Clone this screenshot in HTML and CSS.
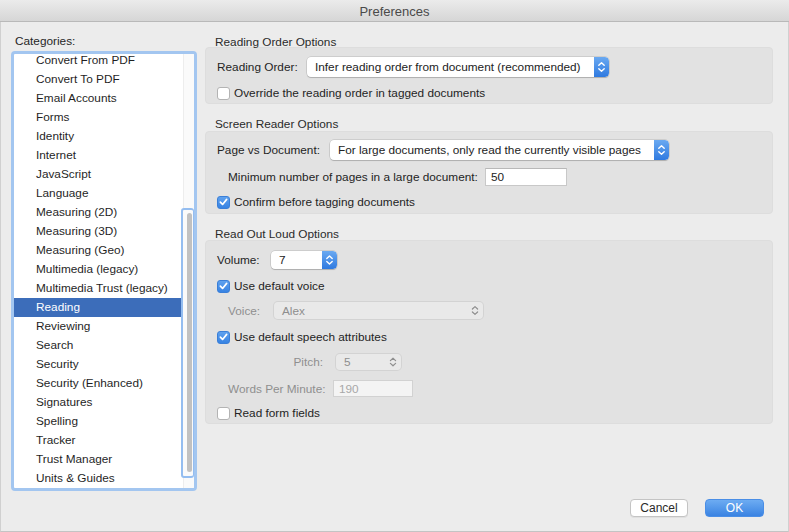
FILE: index.html
```html
<!DOCTYPE html>
<html>
<head>
<meta charset="utf-8">
<title>Preferences</title>
<link rel="stylesheet" href="styles.css">
</head>
<body>
<div class="window">
  <div class="titlebar">Preferences</div>
  <div class="content">
    <div class="left">
      <div class="cat-label">Categories:</div>
      <div class="listbox">
        <ul class="list">
          <li>Convert From PDF</li>
          <li>Convert To PDF</li>
          <li>Email Accounts</li>
          <li>Forms</li>
          <li>Identity</li>
          <li>Internet</li>
          <li>JavaScript</li>
          <li>Language</li>
          <li>Measuring (2D)</li>
          <li>Measuring (3D)</li>
          <li>Measuring (Geo)</li>
          <li>Multimedia (legacy)</li>
          <li>Multimedia Trust (legacy)</li>
          <li class="sel">Reading</li>
          <li>Reviewing</li>
          <li>Search</li>
          <li>Security</li>
          <li>Security (Enhanced)</li>
          <li>Signatures</li>
          <li>Spelling</li>
          <li>Tracker</li>
          <li>Trust Manager</li>
          <li>Units &amp; Guides</li>
        </ul>
        <div class="scrolltrack">
          <div class="scrollring"><div class="thumb"></div></div>
        </div>
      </div>
    </div>
    <div class="right">
      <div class="gtitle t1">Reading Order Options</div>
      <div class="group g1">
        <div class="row r-ro">
          <span class="lbl w-ro">Reading Order:</span>
          <div class="select sel-ro">
            <span class="seltext">Infer reading order from document (recommended)</span>
            <span class="stepper"><svg width="15" height="20" viewBox="0 0 15 20"><path d="M4.8 8.3 L7.5 5.8 L10.2 8.3 M4.8 11.7 L7.5 14.2 L10.2 11.7" fill="none" stroke="#fff" stroke-width="1.4" stroke-linecap="round" stroke-linejoin="round"/></svg></span>
          </div>
        </div>
        <div class="row chkrow c-ovr">
          <span class="chk"></span>
          <span class="lbl">Override the reading order in tagged documents</span>
        </div>
      </div>

      <div class="gtitle t2">Screen Reader Options</div>
      <div class="group g2">
        <div class="row r-pd">
          <span class="lbl w-pd">Page vs Document:</span>
          <div class="select sel-pd">
            <span class="seltext">For large documents, only read the currently visible pages</span>
            <span class="stepper"><svg width="15" height="20" viewBox="0 0 15 20"><path d="M4.8 8.3 L7.5 5.8 L10.2 8.3 M4.8 11.7 L7.5 14.2 L10.2 11.7" fill="none" stroke="#fff" stroke-width="1.4" stroke-linecap="round" stroke-linejoin="round"/></svg></span>
          </div>
        </div>
        <div class="row r-min">
          <span class="lbl w-min">Minimum number of pages in a large document:</span>
          <div class="input in-min">50</div>
        </div>
        <div class="row chkrow c-conf">
          <span class="chk on"><svg width="14" height="14" viewBox="0 0 14 14"><path d="M3.6 7.2 L6 9.6 L10.4 4.2" fill="none" stroke="#fff" stroke-width="1.8" stroke-linecap="round" stroke-linejoin="round"/></svg></span>
          <span class="lbl">Confirm before tagging documents</span>
        </div>
      </div>

      <div class="gtitle t3">Read Out Loud Options</div>
      <div class="group g3">
        <div class="row r-vol">
          <span class="lbl w-vol">Volume:</span>
          <div class="select sel-vol">
            <span class="seltext">7</span>
            <span class="stepper"><svg width="15" height="18" viewBox="0 0 15 18"><path d="M4.8 7.4 L7.5 4.9 L10.2 7.4 M4.8 10.6 L7.5 13.1 L10.2 10.6" fill="none" stroke="#fff" stroke-width="1.4" stroke-linecap="round" stroke-linejoin="round"/></svg></span>
          </div>
        </div>
        <div class="row chkrow c-voice">
          <span class="chk on"><svg width="14" height="14" viewBox="0 0 14 14"><path d="M3.6 7.2 L6 9.6 L10.4 4.2" fill="none" stroke="#fff" stroke-width="1.8" stroke-linecap="round" stroke-linejoin="round"/></svg></span>
          <span class="lbl">Use default voice</span>
        </div>
        <div class="row r-voice">
          <span class="lbl dis w-voice">Voice:</span>
          <div class="select dsel sel-voice">
            <span class="seltext">Alex</span>
            <span class="dstep"><svg width="12" height="17" viewBox="0 0 12 17"><path d="M3.4 7 L6 4.6 L8.6 7 M3.4 10 L6 12.4 L8.6 10" fill="none" stroke="#8e8e8e" stroke-width="1.2" stroke-linecap="round" stroke-linejoin="round"/></svg></span>
          </div>
        </div>
        <div class="row chkrow c-speech">
          <span class="chk on"><svg width="14" height="14" viewBox="0 0 14 14"><path d="M3.6 7.2 L6 9.6 L10.4 4.2" fill="none" stroke="#fff" stroke-width="1.8" stroke-linecap="round" stroke-linejoin="round"/></svg></span>
          <span class="lbl">Use default speech attributes</span>
        </div>
        <div class="row r-pitch">
          <span class="lbl dis w-pitch">Pitch:</span>
          <div class="select dsel sel-pitch">
            <span class="seltext">5</span>
            <span class="dstep"><svg width="12" height="16" viewBox="0 0 12 16"><path d="M3.4 6.6 L6 4.2 L8.6 6.6 M3.4 9.4 L6 11.8 L8.6 9.4" fill="none" stroke="#8e8e8e" stroke-width="1.2" stroke-linecap="round" stroke-linejoin="round"/></svg></span>
          </div>
        </div>
        <div class="row r-wpm">
          <span class="lbl dis w-wpm">Words Per Minute:</span>
          <div class="input din in-wpm">190</div>
        </div>
        <div class="row chkrow c-form">
          <span class="chk"></span>
          <span class="lbl">Read form fields</span>
        </div>
      </div>
    </div>
  </div>
  <div class="footer">
    <button class="btn cancel">Cancel</button>
    <button class="btn ok">OK</button>
  </div>
</div>
</body>
</html>
```

FILE: styles.css
```css
* { box-sizing: border-box; }
html, body { margin: 0; padding: 0; }
body {
  background: #ececec;
  font-family: "Liberation Sans", Arial, sans-serif;
  font-size: 11.8px;
  color: #262626;
  width: 789px;
  height: 532px;
  overflow: hidden;
}
.window {
  width: 789px;
  height: 532px;
  display: flex;
  flex-direction: column;
  border-left: 1px solid #d0d0d0;
  border-right: 1px solid #d0d0d0;
  border-bottom: 1px solid #c4c4c4;
}
.titlebar {
  height: 22px;
  flex: none;
  background: linear-gradient(#ebebeb, #d6d6d6);
  border-bottom: 1px solid #b9b9b9;
  text-align: center;
  font-size: 13px;
  line-height: 23px;
  color: #4a4a4a;
  margin: 0 -1px;
}
.content {
  display: flex;
  padding: 11px 0 0 10px;
  height: 470px;
  flex: none;
}
.left { width: 186px; flex: none; }
.cat-label { height: 18px; line-height: 16px; padding-left: 4px; }
.listbox {
  height: 440px;
  border: 3px solid #a3c6f0;
  border-radius: 4px;
  background: #fff;
  display: flex;
  overflow: hidden;
}
.list {
  list-style: none;
  margin: -3px 0 0 0;
  padding: 0;
  flex: 1;
}
.list li {
  height: 19px;
  line-height: 19px;
  padding-left: 22px;
  white-space: nowrap;
  color: #1f1f1f;
}
.list li.sel { background: #3c6dba; color: #fff; }
.scrolltrack {
  width: 11px;
  flex: none;
  border-left: 1px solid #ededed;
  padding-top: 154px;
  background: #fafafa;
}
.scrollring {
  height: 270px;
  border: 2px solid #94bdf0;
  border-right-width: 1px;
  border-radius: 3px;
  margin-left: -3px;
  padding: 3px 1px 4px 4px;
  display: flex;
  background: #fafafa;
}
.thumb {
  width: 6px;
  height: 100%;
  background: #c1c1c1;
  border-radius: 3px;
}
.right { width: 568px; margin-left: 8px; flex: none; }
.gtitle { height: 14px; padding-left: 10px; color: #2a2a2a; }
.t1 { line-height: 18px; }
.t2 { margin-top: 13px; line-height: 15px; }
.t3 { margin-top: 12px; line-height: 16px; }
.group {
  background: #e2e2e2;
  border: 1px solid #dddddd;
  border-radius: 4px;
  padding-left: 11px;
}
.g1 { height: 57px; padding-top: 9px; }
.g2 { height: 83px; padding-top: 8px; }
.g3 { height: 184px; padding-top: 9px; }
.row { display: flex; align-items: center; white-space: nowrap; }
.lbl { color: #242424; }
.lbl.dis { color: #8f8f8f; }
.w-ro { width: 90px; }
.w-pd { width: 113px; }
.w-min { width: 268px; padding-left: 11px; }
.w-vol { width: 54px; }
.w-voice { width: 57px; padding-left: 11px; }
.w-pitch { width: 119px; text-align: right; padding-right: 13px; }
.w-wpm { width: 116px; padding-left: 11px; }
.select {
  height: 20px;
  background: #fff;
  border-radius: 4px;
  box-shadow: 0 0 0 0.5px rgba(0,0,0,0.18), 0 1px 1px rgba(0,0,0,0.15);
  display: flex;
  align-items: center;
  justify-content: space-between;
  padding-left: 8px;
  overflow: hidden;
}
.seltext { color: #222; }
.stepper {
  width: 15px;
  height: 100%;
  background: linear-gradient(#6aa9f1, #2f7ae0);
  border-radius: 0 4px 4px 0;
  display: flex;
  align-items: center;
  justify-content: center;
}
.stepper svg { display: block; }
.sel-ro { width: 302px; }
.sel-pd { width: 339px; }
.sel-vol { width: 66px; height: 18px; }
.dsel {
  background: #e9e9e9;
  box-shadow: 0 0 0 1px #d3d3d3;
}
.dsel .seltext { color: #8e8e8e; }
.dstep { width: 16px; display: flex; justify-content: center; }
.sel-voice { width: 209px; height: 17px; }
.sel-pitch { width: 65px; height: 16px; }
.input {
  background: #fff;
  border: 1px solid #c8c8c8;
  border-top-color: #b8b8b8;
  padding-left: 5px;
  color: #222;
  display: flex;
  align-items: center;
}
.in-min { width: 82px; height: 18px; }
.din { background: #f4f4f4; border-color: #d2d2d2; color: #a8a8a8; }
.in-wpm { width: 80px; height: 17px; }
.chkrow { height: 14px; }
.chk {
  width: 13px;
  height: 13px;
  border-radius: 3px;
  background: #fff;
  border: 1px solid #b3b3b3;
  margin-right: 4px;
  flex: none;
  display: flex;
  align-items: center;
  justify-content: center;
}
.chk.on {
  background: linear-gradient(#5fa1ee, #3783e3);
  border-color: #3a7fd8;
}
.chk svg { display: block; margin: -1px; }
.r-ro { height: 20px; }
.c-ovr { margin-top: 9px; }
.r-pd { height: 20px; }
.r-min { height: 18px; margin-top: 8px; }
.c-conf { margin-top: 9px; }
.r-vol { height: 18px; margin-top: 1px; }
.c-voice { margin-top: 10px; }
.r-voice { height: 17px; margin-top: 9px; }
.c-speech { margin-top: 11px; }
.r-pitch { height: 16px; margin-top: 10px; }
.r-wpm { height: 17px; margin-top: 10px; }
.c-form { margin-top: 9px; }
.footer {
  display: flex;
  justify-content: flex-end;
  gap: 17px;
  padding: 7px 24px 0 0;
}
.btn {
  font-family: "Liberation Sans", Arial, sans-serif;
  font-size: 12px;
  height: 18px;
  border-radius: 4px;
  padding: 0;
  line-height: 16px;
}
.cancel {
  width: 58px;
  background: #fff;
  border: 1px solid #c4c4c4;
  color: #2a2a2a;
  box-shadow: 0 1px 0 rgba(0,0,0,0.05);
}
.ok {
  width: 59px;
  background: linear-gradient(#6dacf2, #3a83e2);
  border: 1px solid #4a8ee6;
  color: #fff;
}
```
